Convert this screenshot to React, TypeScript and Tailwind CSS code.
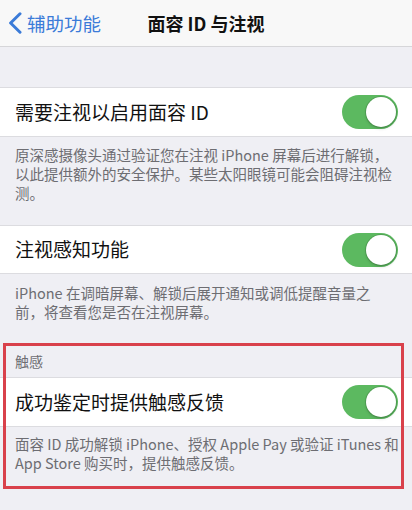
const font = { fontFamily: '"Noto Sans CJK SC", "Noto Sans", sans-serif' }

function Toggle() {
  return (
    <div className="w-[56px] h-[34px] rounded-full bg-[#5cb960] p-[2px] flex justify-end">
      <div className="w-[30px] h-[30px] rounded-full bg-white shadow-[0_0_0_1px_rgba(0,0,0,0.12),0_2px_3px_rgba(0,0,0,0.15)]" />
    </div>
  )
}

function ToggleRow({ label, height }: { label: string; height: string }) {
  return (
    <div
      className={`${height} bg-white border-y border-[#dcdce0] flex items-center justify-between pl-[15px] pr-[14px]`}
    >
      <span className="text-[19px] text-[#111111] whitespace-nowrap">{label}</span>
      <Toggle />
    </div>
  )
}

function Footer({ lines, className }: { lines: string[]; className: string }) {
  return (
    <div className={`px-[15px] text-[14.5px] leading-[19px] text-[#6d6d72] ${className}`}>
      {lines.map((l) => (
        <div key={l} className="whitespace-nowrap">
          {l}
        </div>
      ))}
    </div>
  )
}

export default function App() {
  return (
    <div className="relative w-full min-h-[510px] bg-[#efeff4]" style={font}>
      <div className="h-[47px] bg-[#f8f8f8] border-b border-[#d6d6d9] relative flex items-center justify-center">
        <div className="absolute left-[8px] top-0 h-full flex items-center gap-[5px] text-[#3b7bd8]">
          <svg width="14" height="22" viewBox="0 0 14 22" fill="none">
            <path
              d="M12 1.8 L2.6 11 L12 20.2"
              stroke="currentColor"
              strokeWidth="3"
              strokeLinecap="round"
              strokeLinejoin="round"
            />
          </svg>
          <span className="text-[18.5px] leading-none">辅助功能</span>
        </div>
        <span className="text-[18px] font-semibold text-[#111111]">面容 ID 与注视</span>
      </div>

      <div className="h-[40px]" />

      <ToggleRow label="需要注视以启用面容 ID" height="h-[50px]" />
      <Footer
        className="pt-[8px] pb-[23px]"
        lines={[
          '原深感摄像头通过验证您在注视 iPhone 屏幕后进行解锁，',
          '以此提供额外的安全保护。某些太阳眼镜可能会阻碍注视检',
          '测。',
        ]}
      />

      <ToggleRow label="注视感知功能" height="h-[49px]" />
      <Footer
        className="pt-[9px]"
        lines={['iPhone 在调暗屏幕、解锁后展开通知或调低提醒音量之', '前，将查看您是否在注视屏幕。']}
      />

      <div className="h-[56px] flex items-end px-[15px] pb-[6px]">
        <span className="text-[14px] leading-[19px] text-[#6d6d72]">触感</span>
      </div>
      <ToggleRow label="成功鉴定时提供触感反馈" height="h-[50px]" />
      <Footer
        className="pt-[7px]"
        lines={['面容 ID 成功解锁 iPhone、授权 Apple Pay 或验证 iTunes 和', 'App Store 购买时，提供触感反馈。']}
      />

      <div className="absolute left-[3px] top-[343px] w-[401px] h-[146px] border-[3px] border-[#d9414b] pointer-events-none" />
    </div>
  )
}
